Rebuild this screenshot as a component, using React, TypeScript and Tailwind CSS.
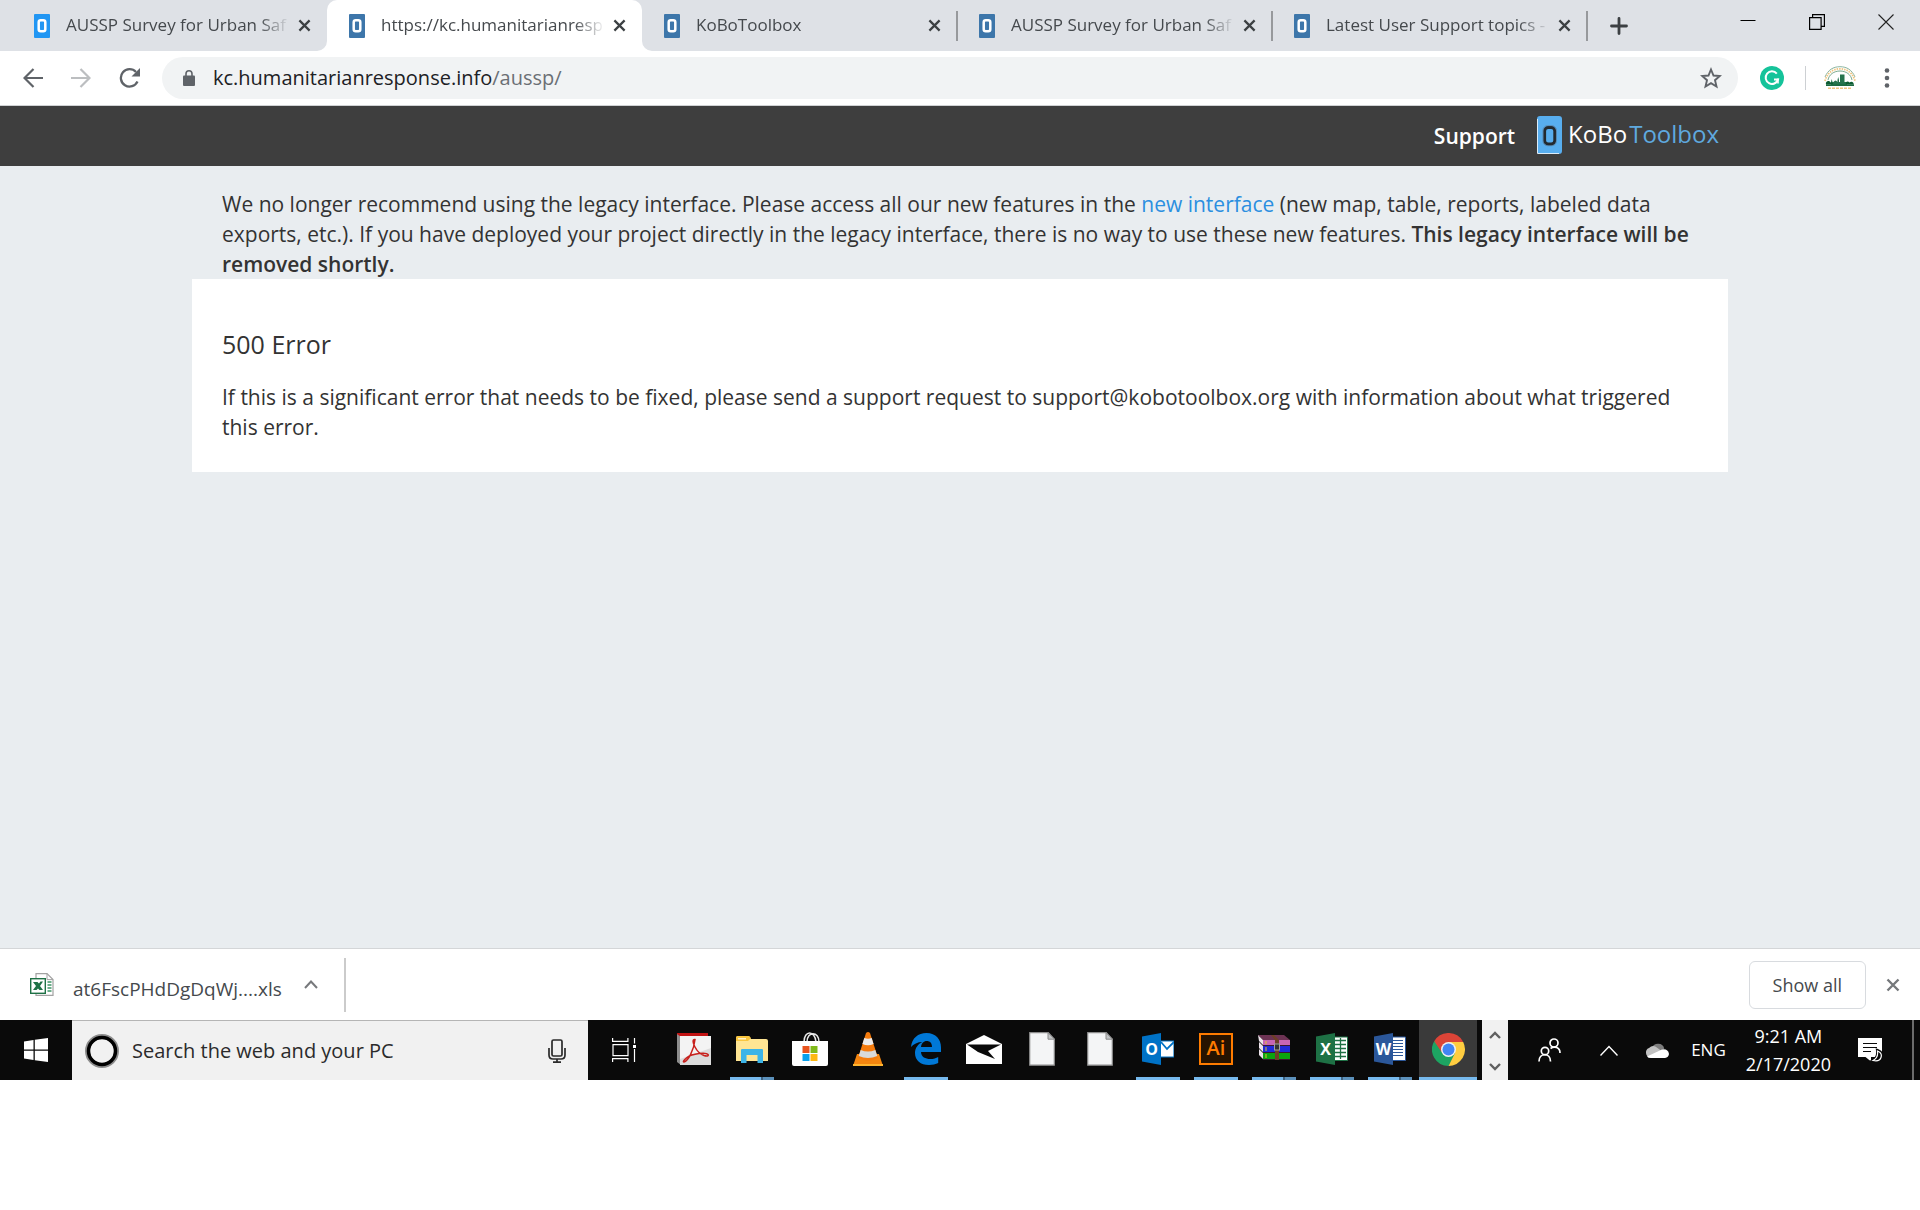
import type { ReactNode } from 'react';
import clsx from 'clsx';

interface Tab {
  title: string;
  active?: boolean;
  bright?: boolean;
  divider?: boolean;
}

interface TaskbarApp {
  name: string;
  icon: ReactNode;
  windows?: 'one' | 'many';
  focused?: boolean;
}

const tabs: Tab[] = [
  { title: 'AUSSP Survey for Urban Saf', bright: true },
  { title: 'https://kc.humanitarianresp', active: true },
  { title: 'KoBoToolbox', divider: true },
  { title: 'AUSSP Survey for Urban Saf', divider: true },
  { title: 'Latest User Support topics -', divider: true },
];

function Favicon({ bright }: { bright?: boolean }) {
  return (
    <svg className="h-6 w-4 shrink-0" viewBox="0 0 16 24" fill="none">
      <rect width="16" height="24" rx="1" fill={bright ? '#2196f3' : '#3d76aa'} />
      <rect x="4.7" y="6.2" width="6.6" height="11" rx="2" stroke="#fff" strokeWidth="2.5" />
    </svg>
  );
}

function CloseIcon({ className }: { className?: string }) {
  return (
    <svg className={className} viewBox="0 0 14 14" fill="none" stroke="currentColor" strokeWidth="2.4">
      <path d="M1.5 1.5l11 11M12.5 1.5l-11 11" />
    </svg>
  );
}

function TabItem({ tab }: { tab: Tab }) {
  return (
    <div
      className={clsx(
        'relative flex h-full w-[315px] min-w-0 items-center pl-[22px] pr-[13px]',
        tab.active && 'rounded-t-[10px] bg-white'
      )}
    >
      {tab.active && (
        <>
          <svg className="absolute bottom-0 -left-[10px] size-[10px]" viewBox="0 0 10 10">
            <path d="M10 0v10H0A10 10 0 0 0 10 0z" fill="#fff" />
          </svg>
          <svg className="absolute bottom-0 -right-[10px] size-[10px]" viewBox="0 0 10 10">
            <path d="M0 0v10h10A10 10 0 0 1 0 0z" fill="#fff" />
          </svg>
        </>
      )}
      <Favicon bright={tab.bright} />
      <span className="mr-1 mb-[2px] ml-4 min-w-0 flex-1 overflow-hidden text-[17px] leading-6 whitespace-nowrap text-[#45494d] [mask-image:linear-gradient(to_right,black_86%,transparent)]">
        {tab.title}
      </span>
      <button aria-label="Close tab" className="flex size-5 items-center justify-center text-[#3c4043]">
        <CloseIcon className="size-[13px]" />
      </button>
      {tab.divider && <span className="absolute top-[11px] -right-px h-[30px] w-[2px] bg-[#97999c]" />}
    </div>
  );
}

function TabStrip() {
  return (
    <div className="flex h-[51px] items-center bg-[#dee1e6] pl-3">
      {tabs.map((tab, i) => (
        <TabItem key={i} tab={tab} />
      ))}
      <button aria-label="New tab" className="ml-5 flex size-6 items-center justify-center">
        <svg className="size-[18px]" viewBox="0 0 18 18" stroke="#3c4043" strokeWidth="2.8" strokeLinecap="round">
          <path d="M9 1.5v15M1.5 9h15" />
        </svg>
      </button>
      <div className="mb-2 ml-auto flex items-center gap-[53px] pr-[26px]">
        <button aria-label="Minimize">
          <svg className="size-4" viewBox="0 0 16 16" stroke="#000">
            <path d="M.5 6.5h15" />
          </svg>
        </button>
        <button aria-label="Restore">
          <svg className="size-4" viewBox="0 0 16 16" fill="none" stroke="#000" strokeWidth="1.2">
            <path d="M.6 3.6h11.5v11.8H.6zM3.6 3.6V.6h11.8v11.8h-3.3" />
          </svg>
        </button>
        <button aria-label="Close window">
          <svg className="size-4" viewBox="0 0 16 16" stroke="#222" strokeWidth="1.1">
            <path d="M.5 .5l15 15M15.5 .5l-15 15" />
          </svg>
        </button>
      </div>
    </div>
  );
}

function ProfileBadge() {
  return (
    <svg className="h-6 w-[34px]" viewBox="0 0 34 24" fill="none">
      <path d="M2 11C5 4 10 .7 17 .7S29 4 32 11" stroke="#8bb5a0" />
      <path d="M2 15C4 7 10 2.800 17 2.800S30 7 32 15" stroke="#efc581" strokeWidth="1.8" strokeDasharray="1.5 1" />
      <path d="M5 14C6 8.500 11 5 17 5s11 3.500 12 9" stroke="#79a98e" />
      <path d="M8 19v-3l.7-3 .8 3h1q2-3 4 0v-2l.7-3 .8 3v2h1V8.500h4.500V16h2.500v3z" fill="#26734d" />
      <path d="M3 18.500c-1-3 3-5 4.500-2 1.500-1 3 .5 2.500 2zM23 18.500c-1-3 2-4 3.500-2 2-2 5 0 4 2z" fill="#0c5c31" />
      <path d="M3 18.300h28v1.700H3z" fill="#1c6b41" />
      <path d="M5 22.300h24" stroke="#efc581" strokeWidth="1.6" strokeDasharray="3 1" />
    </svg>
  );
}

function Toolbar() {
  return (
    <div className="flex h-[55px] items-center border-b border-[#d0d2d4] bg-white pr-7 pl-[23px]">
      <div className="flex items-center gap-7 text-[#5f6368]">
        <button aria-label="Back">
          <svg className="size-5" viewBox="0 0 20 20" fill="none" stroke="#5f6368" strokeWidth="2.2">
            <path d="M20 10H2M10.5 1L1.5 10l9 9" />
          </svg>
        </button>
        <button aria-label="Forward">
          <svg className="size-5" viewBox="0 0 20 20" fill="none" stroke="#bcbec0" strokeWidth="2.2">
            <path d="M0 10h18M9.5 1l9 9-9 9" />
          </svg>
        </button>
        <button aria-label="Reload">
          <svg className="h-5 w-[22px]" viewBox="0 0 22 20" fill="none">
            <path d="M18.5 13.5A8.7 8.7 0 1 1 17 4" stroke="#5f6368" strokeWidth="2.3" />
            <path d="M21 0v8.5h-8.5z" fill="#5f6368" />
          </svg>
        </button>
      </div>
      <form className="ml-[21px] flex h-[42px] flex-1 items-center rounded-full bg-[#f1f3f4] pr-4 pl-[21px]">
        <svg className="h-4 w-3 shrink-0" viewBox="0 0 12 16" fill="none">
          <rect y="5.5" width="12" height="10.5" rx="1" fill="#5f6368" />
          <path d="M3 6V3.8a3 3 0 0 1 6 0V6" stroke="#5f6368" strokeWidth="1.6" />
        </svg>
        <a href="#address" className="ml-[18px] flex-1 text-xl leading-7 text-[#202124]">
          kc.humanitarianresponse.info<span className="text-[#6b6f74]">/aussp/</span>
        </a>
        <button type="button" aria-label="Bookmark this page">
          <svg className="size-[22px]" viewBox="0 0 22 22" fill="none" stroke="#5f6368" strokeWidth="1.9">
            <path d="M11 2.5l2.5 6 6.3.5-4.8 4.2 1.5 6.3L11 16.1l-5.5 3.4L7 13.2 2.2 9l6.3-.5z" />
          </svg>
        </button>
      </form>
      <button aria-label="Grammarly" className="ml-[22px]">
        <svg className="size-6" viewBox="0 0 24 24" fill="none">
          <circle cx="12" cy="12" r="12" fill="#15c39a" />
          <path d="M16.8 7.6A6.300 6.300 0 1 0 18 13.500h-4" stroke="#fff" strokeWidth="2" />
          <path d="M18 12.500v5" stroke="#fff" strokeWidth="1.6" />
        </svg>
      </button>
      <span className="ml-[21px] h-6 w-px bg-[#cdd0d3]" />
      <button aria-label="Profile" className="ml-[17px]">
        <ProfileBadge />
      </button>
      <button aria-label="Menu" className="ml-[25px]">
        <svg className="h-5 w-[10px]" viewBox="0 0 10 20" fill="#5f6368">
          <circle cx="5" cy="2.5" r="2.3" />
          <circle cx="5" cy="10" r="2.3" />
          <circle cx="5" cy="17.5" r="2.3" />
        </svg>
      </button>
    </div>
  );
}

function SiteHeader() {
  return (
    <header className="flex h-[60px] items-center justify-end bg-[#3e3e3e] pr-[201px]">
      <a href="#support" className="text-[21px] leading-[30px] font-semibold text-white">
        Support
      </a>
      <a href="#home" className="ml-[22px] flex items-center">
        <svg className="mb-[3px] h-[38px] w-[25px]" viewBox="0 0 25 38" fill="none">
          <rect width="25" height="38" rx="3" fill="#58aeef" />
          <path d="M.5 3v34.5H22" stroke="#dcecf8" />
          <rect x="7.7" y="11.5" width="10" height="16.5" rx="3.5" stroke="#232a30" strokeWidth="2.8" />
          <rect x="6" y="9.7" width="13.4" height="20" rx="4.5" stroke="#58708a" strokeWidth=".6" />
        </svg>
        <span className="mb-1 ml-[6px] flex gap-[2px] text-2xl leading-9">
          <span className="text-white">KoBo</span>
          <span className="text-[#5fa9df]">Toolbox</span>
        </span>
      </a>
    </header>
  );
}

function ErrorPage() {
  return (
    <main className="flex-1 bg-[#e9edf0] pt-[23px] text-[21px] leading-[30px] text-[#333]">
      <div className="mx-auto w-4/5">
        <p className="px-[30px]">
          We no longer recommend using the legacy interface. Please access all our new features in the{' '}
          <a href="#new" className="text-[#2b8fe0]">new interface</a> (new map, table, reports, labeled data
          exports, etc.). If you have deployed your project directly in the legacy interface, there is no way to
          use these new features. <strong className="font-semibold">This legacy interface will be removed shortly.</strong>
        </p>
        <section className="bg-white px-[30px] pt-[50px] pb-[30px]">
          <h1 className="text-[25px] leading-[30px] font-medium">500 Error</h1>
          <p className="mt-[23px]">
            If this is a significant error that needs to be fixed, please send a support request to
            support@kobotoolbox.org with information about what triggered this error.
          </p>
        </section>
      </div>
    </main>
  );
}

function DownloadShelf() {
  return (
    <div className="flex h-[72px] items-center border-t border-[#d4d6d8] bg-white pr-5 pl-[30px]">
      <button className="flex items-center">
        <svg className="h-[23px] w-6" viewBox="0 0 24 23" fill="none">
          <path d="M6 .6h11l6 6v15.8H6z" fill="#fff" stroke="#a2a2a2" strokeWidth="1.2" />
          <path d="M17 .6v6h6" stroke="#a2a2a2" />
          <path d="M17.5 9h4M17.5 12h4M17.5 15h4M17.5 18h4" stroke="#6bae8a" strokeWidth="1.8" />
          <rect x=".7" y="5.7" width="14.6" height="14.6" fill="#fff" stroke="#1e7145" strokeWidth="1.4" />
          <path d="M3 9h4.500l1.500 1.500L10.500 8.500h2.500l-3 4.500 3 4H9.500L8 15.500 6.500 17H3l3-4z" fill="#1e7145" />
        </svg>
        <span className="mt-2 ml-[19px] text-[19px] leading-6 text-[#45494d]">at6FscPHdDgDqWj....xls</span>
      </button>
      <button aria-label="Download options" className="ml-[22px]">
        <svg className="h-[9px] w-[14px]" viewBox="0 0 14 9" fill="none" stroke="#77797c" strokeWidth="2">
          <path d="M1 8l6-6.5L13 8" />
        </svg>
      </button>
      <span className="ml-[26px] h-[54px] w-[2px] bg-[#cbcbcb]" />
      <button className="ml-auto h-12 rounded-md border border-[#d8dbdf] px-[23px] text-lg leading-6 font-medium text-[#45494d]">
        Show all
      </button>
      <button aria-label="Close downloads" className="ml-5 text-[#75787b]">
        <CloseIcon className="size-[14px]" />
      </button>
    </div>
  );
}

function BlankFileIcon() {
  return (
    <svg className="h-[34px] w-[26px]" viewBox="0 0 26 34">
      <path d="M.7.7h18.6l6 6.5v26H.7z" fill="#f4f5f6" stroke="#8b8b8b" strokeWidth="1.2" />
      <path d="M19 .7v6.5h6.5z" fill="#c3c5c7" stroke="#8b8b8b" />
    </svg>
  );
}

// Outlook, Excel and Word share the folded cover with a letter on it
function OfficeIcon({ letter, color, children }: { letter: string; color: string; children: ReactNode }) {
  return (
    <svg className="h-8 w-8" viewBox="0 0 32 32">
      {children}
      <path d="M0 3.5L19 0v32L0 28.5z" fill={color} />
      <text x="9.5" y="21.5" textAnchor="middle" fontFamily="Open Sans, sans-serif" fontSize="16" fontWeight="700" fill="#fff">
        {letter}
      </text>
    </svg>
  );
}

const taskbarApps: TaskbarApp[] = [
  {
    name: 'Acrobat',
    icon: (
      <svg className="h-8 w-[34px]" viewBox="0 0 34 32" fill="none">
        <path d="M0 0h31v29H2z" fill="#c11313" />
        <path d="M0 1l4 3v28l-4-3z" fill="#8d8d8d" />
        <path d="M3 3h31v29H3z" fill="#dcdcdc" />
        <path d="M3 3h31v12L3 26z" fill="#f3f3f3" />
        <path
          d="M18 6.5c-3-.5-2 4 0 7.5 2 4 5 7 9 8.500 3 1 5 .5 4-1s-5-1.500-9-1-9 1.500-12 4-4.500 4.500-3 4.500c4-1 10-12 11-22.500z"
          stroke="#c8201c"
          strokeWidth="1.5"
        />
      </svg>
    ),
  },
  {
    name: 'File Explorer',
    windows: 'many',
    icon: (
      <svg className="h-[27px] w-8" viewBox="0 0 32 27">
        <path d="M0 2q0-2 2-2h11l2 3h15q2 0 2 2v20H0z" fill="#ffe593" />
        <path d="M0 4V2q0-2 2-2h11l2 2-3 3H0z" fill="#f9c63f" />
        <path d="M2 2h8v1.5H2z" fill="#fff3c8" />
        <path d="M5 14q0-1 1-1h20q1 0 1 1v13h-5.5v-8h-11v8H5z" fill="#3db4e7" />
      </svg>
    ),
  },
  {
    name: 'Microsoft Store',
    icon: (
      <svg className="h-[34px] w-9" viewBox="0 0 36 34" fill="none">
        <path d="M12 10C12-2 23-2 24 10M15 10C15-1 27-1 27 10" stroke="#e7e7e7" strokeWidth="1.5" />
        <path d="M0 9h36v23q0 2-2 2H2q-2 0-2-2z" fill="#fff" />
        <path d="M10.5 14h7v7h-7z" fill="#e8541e" />
        <path d="M18.5 14h7v7h-7z" fill="#80ba1b" />
        <path d="M10.5 22h7v7h-7z" fill="#0ba1ec" />
        <path d="M18.5 22h7v7h-7z" fill="#fdb813" />
      </svg>
    ),
  },
  {
    name: 'VLC',
    icon: (
      <svg className="h-[34px] w-[30px]" viewBox="0 0 30 34">
        <path d="M4 22h22l4 12H0z" fill="#f5860f" />
        <path d="M0 32h30v2H0z" fill="#ffb42e" />
        <path d="M5 26q10 5 20 0L17 1q-2-2-4 0z" fill="#f47b0d" />
        <path d="M11.3 6q3.7 1.5 7.4 0l1.9 6q-5.6 2.5-11.2 0z" fill="#ececec" />
        <path d="M7.7 18q7.3 3 14.6 0l2 6q-9.3 4-18.6 0z" fill="#d9d9d9" />
      </svg>
    ),
  },
  {
    name: 'Edge',
    windows: 'one',
    icon: (
      <svg className="h-8 w-8" viewBox="0 0 32 32">
        <path
          d="M1 14C2 5 8 0 16.5 0 26 0 31 6.5 31 14.5V19H11c.2 5 4.5 7 9.2 7 3.3 0 6-.9 8-2.1v6.2C25.7 31.4 22.5 32 19 32 10.5 32 5 27.5 5 20c0-5 3-9 7.5-11C7.5 9 3.5 11 1 14zm10 0h11c0-4-2-6-5.2-6C13.5 8 11.5 10.5 11 14z"
          fill="#0078d7"
        />
      </svg>
    ),
  },
  {
    name: 'Mail',
    icon: (
      <svg className="h-[29px] w-9" viewBox="0 0 36 29">
        <path d="M0 9L18 0l18 9v20H0z" fill="#fff" />
        <path d="M1 9.5h34L22 16l7 8-17-7z" fill="#0a0a0a" />
      </svg>
    ),
  },
  { name: 'Document', icon: <BlankFileIcon /> },
  { name: 'Document', icon: <BlankFileIcon /> },
  {
    name: 'Outlook',
    windows: 'one',
    icon: (
      <OfficeIcon letter="O" color="#0072c6">
        <path d="M17 8h15v16H17z" fill="#fff" stroke="#0072c6" strokeWidth="1.2" />
        <path d="M19 9l6 7 7-7" fill="none" stroke="#0072c6" strokeWidth="1.8" />
      </OfficeIcon>
    ),
  },
  {
    name: 'Illustrator',
    windows: 'one',
    icon: (
      <svg className="h-8 w-[34px]" viewBox="0 0 34 32">
        <rect x="1" y="1" width="32" height="30" fill="#261300" stroke="#ff7c00" strokeWidth="2" />
        <text x="17" y="22" textAnchor="middle" fontFamily="Open Sans, sans-serif" fontSize="20" fontWeight="600" fill="#ff7c00">
          Ai
        </text>
      </svg>
    ),
  },
  {
    name: 'WinRAR',
    windows: 'many',
    icon: (
      <svg className="mb-1 h-[26px] w-8" viewBox="0 0 32 26">
        <path d="M0 1h26l6 5H5z" fill="#6d3354" />
        <path d="M5 6h27v5H5z" fill="#c766b4" />
        <path d="M5 12h27v6H5z" fill="#1f29d8" />
        <path d="M5 19h27v6H5z" fill="#0ba50f" />
        <path d="M0 1l5 5v5L1 7zM1 8l4 4v6l-4-4zM1 15l4 4v6l-4-4z" fill="#ece3ea" />
        <path d="M5 11.5h27M5 18.5h27M5 25.5h27" stroke="#3a1730" />
        <path d="M13 1l4 5v20h4V6l-5-5z" fill="#6e4026" />
        <rect x="16.5" y="10" width="5" height="6" fill="#333" stroke="#a0a0a0" />
        <path d="M8 7v3M8 13v4M8 20v4" stroke="#e3c230" />
      </svg>
    ),
  },
  {
    name: 'Excel',
    windows: 'many',
    icon: (
      <OfficeIcon letter="X" color="#1e7145">
        <path d="M17 4h14.5v23.5H17z" fill="#fff" stroke="#1e7145" />
        <path d="M19 7.5h11M19 11.5h11M19 15.5h11M19 19.5h11M19 23.5h11M24.5 5v21" stroke="#1e7145" strokeWidth="1.3" />
      </OfficeIcon>
    ),
  },
  {
    name: 'Word',
    windows: 'many',
    icon: (
      <OfficeIcon letter="W" color="#2b579a">
        <path d="M17 4h14.5v23.5H17z" fill="#fff" stroke="#2b579a" />
        <path d="M19 7.5h10M19 10.5h10M19 13.5h10M19 16.5h10M19 19.5h10M19 22.5h10" stroke="#2b579a" strokeWidth="1.2" />
      </OfficeIcon>
    ),
  },
  {
    name: 'Chrome',
    focused: true,
    icon: (
      <svg className="size-[33px]" viewBox="0 0 33 33">
        <path d="M16.5 16.5L2.2 8.25A16.5 16.5 0 0 1 30.8 8.25z" fill="#db4437" />
        <path d="M16.5 16.5L2.2 8.25A16.5 16.5 0 0 0 16.5 33l7-12.5z" fill="#1da462" />
        <path d="M16.5 9h14.7A16.5 16.5 0 0 1 16.5 33L23 20z" fill="#ffcd40" />
        <path d="M2.2 8.25L9.5 20.5l4-9z" fill="#1da462" />
        <path d="M2.2 8.25L9.5 19l7-10h14.6l-.4-.75z" fill="#db4437" />
        <circle cx="16.5" cy="16.5" r="7.5" fill="#f1f1f1" />
        <circle cx="16.5" cy="16.5" r="6" fill="#4285f4" />
      </svg>
    ),
  },
];

function TaskbarButton({ app }: { app: TaskbarApp }) {
  return (
    <button
      aria-label={app.name}
      className={clsx('relative flex h-full w-[58px] items-center justify-center pb-[2px]', app.focused && 'bg-[#3a3a3a]')}
    >
      {app.icon}
      {app.focused && <span className="absolute inset-x-0 bottom-0 h-[3px] bg-[#76b9ed]" />}
      {app.windows && (
        <span className="absolute inset-x-[7px] bottom-0 flex h-[3px] bg-[#76b9ed]">
          {app.windows === 'many' && <span className="ml-auto w-[13px] border-l-2 border-[#3f6280] bg-[#5c91bb]" />}
        </span>
      )}
    </button>
  );
}

function Taskbar() {
  return (
    <div className="flex h-[60px] items-center bg-[#0a0a0a] text-white">
      <button aria-label="Start" className="flex h-full w-[72px] items-center justify-center">
        <svg className="size-6" viewBox="0 0 24 24" fill="#fff">
          <path d="M0 3.5L9.5 2v9.5H0zM10.8 1.8L24 0v11.5H10.8zM0 12.7h9.5V22L0 20.6zM10.8 12.7H24V24l-13.2-1.8z" />
        </svg>
      </button>
      <label className="flex h-full w-[516px] items-center border-t border-[#b5b5b5] bg-[#f1f1f1] pr-[22px] pl-[13px]">
        <svg className="size-[34px] shrink-0" viewBox="0 0 34 34" fill="none">
          <circle cx="17" cy="17" r="14.5" stroke="#8c8c8c" strokeWidth="5" />
          <circle cx="17" cy="17" r="13.5" stroke="#000" strokeWidth="3.5" />
        </svg>
        <input
          type="text"
          placeholder="Search the web and your PC"
          className="ml-[13px] min-w-0 flex-1 bg-transparent text-xl leading-7 text-[#2b2b2b] outline-none placeholder:text-[#2b2b2b]"
        />
        <svg className="h-6 w-[18px] shrink-0" viewBox="0 0 18 24" fill="none" stroke="#2b2b2b" strokeWidth="1.7">
          <rect x="4" y="1" width="10" height="16" rx="1.5" />
          <path d="M1 9v7q0 4 4 4h8q4 0 4-4V9M9 20v3M5 23.1h8" />
        </svg>
      </label>
      <button aria-label="Task view" className="ml-6">
        <svg className="h-6 w-[25px]" viewBox="0 0 25 24" fill="none" stroke="#fff" strokeWidth="1.2">
          <path d="M.6 0v3.4h15.3V0M1 6.6h15v11H1zM.6 24v-3.4h15.3V24M22.5 0v5.5M22.5 11v13" />
          <path d="M21 7h3v3h-3z" fill="#fff" stroke="none" />
        </svg>
      </button>
      <div className="ml-7 flex h-full">
        {taskbarApps.map((app, i) => (
          <TaskbarButton key={i} app={app} />
        ))}
      </div>
      <div className="ml-[5px] flex h-full w-[26px] flex-col items-center justify-between bg-[#f1f1f1] pt-[11px] pb-[9px]">
        <button aria-label="Scroll up" className="flex">
          <svg className="h-2 w-3" viewBox="0 0 12 8" fill="none" stroke="#606060" strokeWidth="2.4">
            <path d="M1 7l5-5 5 5" />
          </svg>
        </button>
        <button aria-label="Scroll down" className="flex">
          <svg className="h-2 w-3" viewBox="0 0 12 8" fill="none" stroke="#606060" strokeWidth="2.4">
            <path d="M1 1l5 5 5-5" />
          </svg>
        </button>
      </div>
      <div className="ml-auto flex h-full items-center pr-[6px]">
        <button aria-label="People">
          <svg className="h-6 w-[23px]" viewBox="0 0 23 24" fill="none" stroke="#fff" strokeWidth="1.7">
            <circle cx="16" cy="5" r="4" />
            <circle cx="7" cy="13" r="3.7" />
            <path d="M1 23.5c0-9 11.5-9 11.5 0M12.5 10.5c4-3 9.5-1 9.5 4.5" />
          </svg>
        </button>
        <button aria-label="Show hidden icons" className="ml-[39px]">
          <svg className="h-[11px] w-[18px]" viewBox="0 0 18 11" fill="none" stroke="#fff" strokeWidth="1.4">
            <path d="M.5 10.5L9 1.500l8.500 9" />
          </svg>
        </button>
        <button aria-label="OneDrive" className="ml-[27px]">
          <svg className="h-4 w-6" viewBox="0 0 24 16">
            <path d="M7 6a6.5 6.5 0 0 1 12.3.5l-7 5z" fill="#7d7d7d" />
            <path d="M5 15.5A5 5 0 0 1 4 6q4-4 8.5 0l4 3z" fill="#c2c2c2" />
            <path d="M2 14.5L17 7.5q6-1 7 4.5-.5 3.500-4 4H6q-3 0-4-1.500z" fill="#fff" />
          </svg>
        </button>
        <span className="ml-[22px] text-[17px] leading-7">ENG</span>
        <time className="ml-5 text-center text-lg leading-7">
          9:21 AM
          <br />
          2/17/2020
        </time>
        <button aria-label="Notifications" className="ml-[27px]">
          <svg className="h-6 w-[25px]" viewBox="0 0 25 24" fill="none">
            <path d="M0 0h24v19H13v4.5L7.5 19H0z" fill="#fff" />
            <path d="M5 5.5h14M5 9.5h14M5 13.5h8" stroke="#0a0a0a" strokeWidth="1.2" />
            <path d="M19.5 12.5q5.5 2 4 7t-9 3.5q6-3 5-10.5z" fill="#0a0a0a" stroke="#0a0a0a" strokeWidth="3" />
            <path d="M19.5 13q5 2 3.5 6.5t-8 3q5.5-3 4.5-9.5z" fill="#0a0a0a" stroke="#fff" strokeWidth="1.2" />
          </svg>
        </button>
        <span className="ml-[29px] h-full w-[2px] bg-[#6b6b6b]" />
      </div>
    </div>
  );
}

export default function App() {
  return (
    <div className="flex min-h-screen flex-col bg-white pb-[130px] font-['Open_Sans',sans-serif]">
      <TabStrip />
      <Toolbar />
      <SiteHeader />
      <ErrorPage />
      <DownloadShelf />
      <Taskbar />
    </div>
  );
}
